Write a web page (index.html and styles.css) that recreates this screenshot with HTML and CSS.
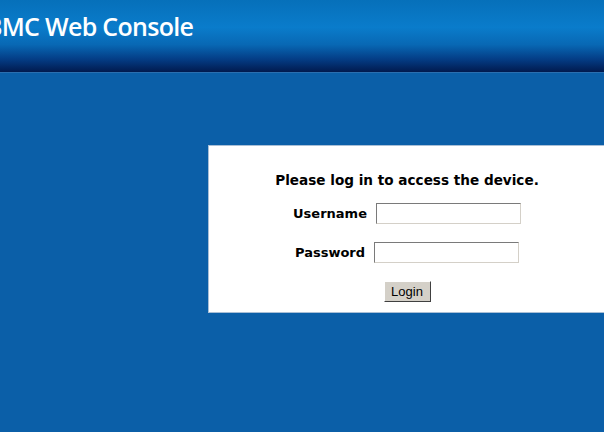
FILE: index.html
```html
<!DOCTYPE html>
<html>
<head>
<meta charset="utf-8">
<title>BMC Web Console</title>
<link rel="stylesheet" href="styles.css">
</head>
<body>
<div class="header">
  <h1 class="title">BMC Web Console</h1>
</div>
<div class="main">
  <div class="box">
    <p class="prompt">Please log in to access the device.</p>
    <div class="row user-row">
      <label class="lbl" for="u">Username</label>
      <input class="field" id="u" type="text">
    </div>
    <div class="row pass-row">
      <label class="lbl" for="p">Password</label>
      <input class="field" id="p" type="password">
    </div>
    <div class="row btn-row">
      <button class="btn" type="button">Login</button>
    </div>
  </div>
</div>
</body>
</html>
```
FILE: styles.css
```css
html, body {
  margin: 0;
  padding: 0;
  height: 100%;
  overflow: hidden;
  background: #0b5fa8;
}
.header {
  height: 72px;
  background: linear-gradient(to bottom, #0670ba 0%, #0a7ccb 38%, #0868b4 62%, #043d86 82%, #011a4e 100%);
  border-bottom: 1px solid #2a6fb0;
  overflow: hidden;
}
.title {
  margin: 0 0 0 -14px;
  padding-top: 10px;
  font-family: "Open Sans", sans-serif;
  font-weight: 600;
  font-size: 25px;
  line-height: 32px;
  letter-spacing: -0.7px;
  color: #ffffff;
  white-space: nowrap;
}
.main {
  padding: 72px 0 0 208px;
}
.box {
  width: 398px;
  box-sizing: border-box;
  background: #ffffff;
  border: 1px solid #a9bfd6;
  padding: 26px 0 10px;
}
.prompt {
  margin: 0 0 15px;
  text-align: center;
  font-family: "DejaVu Sans", Verdana, sans-serif;
  font-weight: bold;
  font-size: 13.6px;
  color: #000;
}
.row {
  display: flex;
  justify-content: center;
  align-items: center;
  gap: 9px;
}
.user-row { margin-bottom: 18px; }
.pass-row { margin-bottom: 18px; }
.lbl {
  font-family: "DejaVu Sans", Verdana, sans-serif;
  font-weight: bold;
  font-size: 13px;
  color: #000;
}
.field {
  width: 145px;
  height: 21px;
  box-sizing: border-box;
  margin: 0;
  padding: 1px 2px;
  border: 1px solid;
  border-color: #7a7a7a #d4d0c8 #d4d0c8 #7a7a7a;
  background: #fff;
  font-size: 12px;
}
.btn {
  width: 47px;
  height: 21px;
  padding: 0;
  margin: 0;
  background: #d4d0c8;
  border: 1px solid;
  border-color: #fff #404040 #404040 #fff;
  font-family: "Liberation Sans", Arial, sans-serif;
  font-size: 13px;
  color: #000;
}
```
